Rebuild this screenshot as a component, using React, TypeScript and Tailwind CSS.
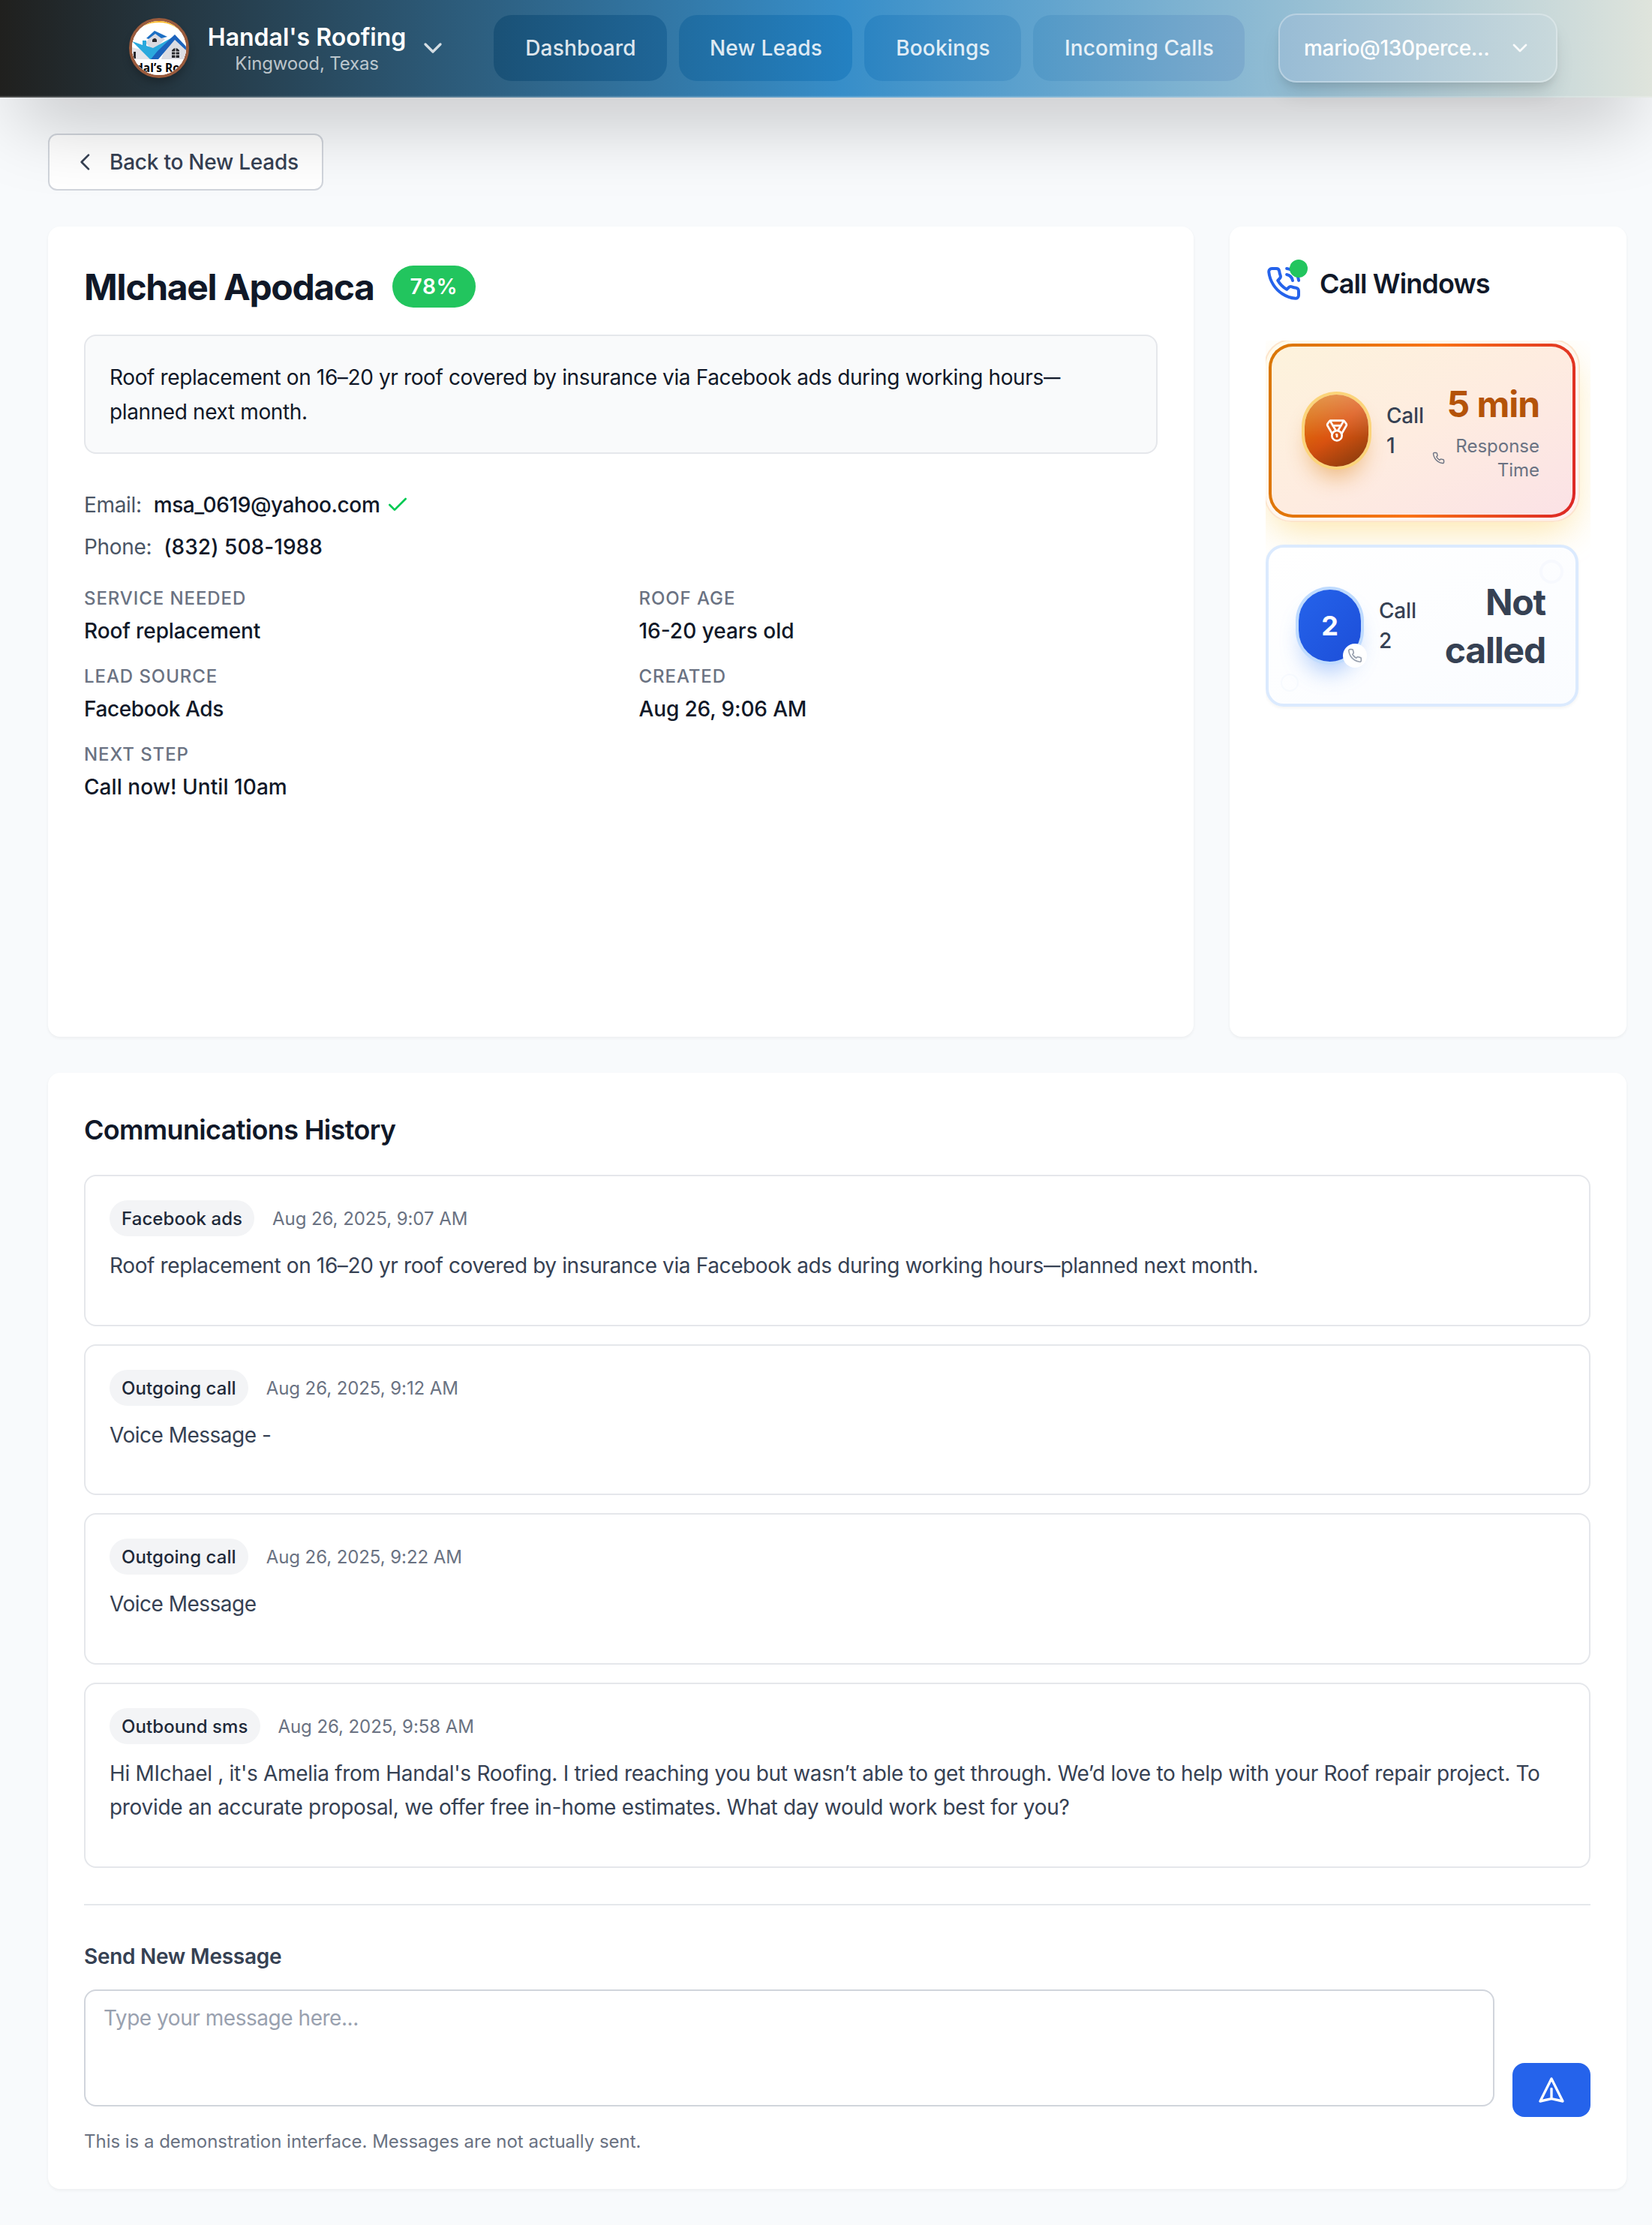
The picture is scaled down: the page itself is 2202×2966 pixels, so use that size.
import { Check, ChevronDown, Medal } from 'lucide-react';
import { Fragment, type ReactNode } from 'react';

const PHONE =
  'M22 16.92v3a2 2 0 0 1-2.18 2 19.79 19.79 0 0 1-8.63-3.07 19.5 19.5 0 0 1-6-6 19.79 19.79 0 0 1-3.07-8.67A2 2 0 0 1 4.11 2h3a2 2 0 0 1 2 1.72 12.84 12.84 0 0 0 .7 2.81 2 2 0 0 1-.45 2.11L8.09 9.91a16 16 0 0 0 6 6l1.27-1.27a2 2 0 0 1 2.11-.45 12.84 12.84 0 0 0 2.81.7A2 2 0 0 1 22 16.92z';

function Icon({ className, children }: { className: string; children: ReactNode }) {
  return (
    <svg
      viewBox="0 0 24 24"
      fill="none"
      stroke="currentColor"
      strokeWidth={2}
      strokeLinecap="round"
      strokeLinejoin="round"
      className={className}
    >
      {children}
    </svg>
  );
}

/* Sets em dashes slightly narrower than the font draws them. */
function Prose({ text }: { text: string }) {
  return (
    <>
      {text.split('—').map((part, i) => (
        <Fragment key={i}>
          {i > 0 && <span className="-mr-[5px] inline-block origin-left scale-x-[0.8]">—</span>}
          {part}
        </Fragment>
      ))}
    </>
  );
}

function Logo() {
  return (
    <div className="size-20 shrink-0 overflow-hidden rounded-full border-4 border-[#9a5b3d] bg-white shadow-[0_8px_12px_-2px_rgba(0,0,0,0.25)]">
      <svg viewBox="4 4 72 72" className="size-full">
        <rect width="80" height="80" fill="#fff" />
        <path d="M2 30C10 12 24 6 40 6s30 8 38 26V0H2z" fill="#fdb81e" />
        <path d="M4 28C14 15 26 12 40 13c16 1 28 7 36 22v45H4z" fill="#fff" />
        <path d="M22 33 34 19l14 9-9 9-9 5z" fill="#d9d9e0" />
        <path d="M34 17 23 27l3 1 9-7 8 6 8-2z" fill="#1c6fc4" />
        <path d="M31 32v-3q3.500-4 6 0v3z" fill="#26262b" />
        <path d="M4 39v16h27l-16-13z" fill="#e4e4e9" />
        <path d="M43 55 47 43l14-16 15 14v14z" fill="#dcdce2" />
        <path d="M4 31 18 36v-6h5v7l9 3 29-16L38 55H28z" fill="#2ba9dd" />
        <path d="M61 22 38 44l-9 11h10l22-26 15 14v-5z" fill="#1c63bd" />
        <path d="M57 53V43q5-6 10 0v10z" fill="#26262b" />
        <path d="M62 40v13M57 45h10M57 49h10" stroke="#fff" strokeWidth="1" />
        <path d="M6 45h3v9H6z" fill="#26262b" />
        <text x="9" y="72" fontSize="15.500" fontWeight="700" fontFamily="Open Sans, sans-serif" fill="#000">
          dal’s Roo
        </text>
      </svg>
    </div>
  );
}

function Header() {
  const pill =
    'flex h-22 items-center justify-center rounded-3xl bg-linear-to-r pl-px text-[28px] font-medium tracking-[0.006em] text-white/85';
  return (
    <header className="relative z-10 flex h-[130px] items-center border-b-2 border-white/20 bg-[linear-gradient(90deg,#20201e_0%,#378ec9_51%,#dfe4dc_100%)] bg-origin-border pl-[172px] shadow-[0_50px_100px_-24px_rgba(0,0,0,0.25)]">
      <Logo />
      <div className="ml-[25px] flex w-[264px] flex-col items-center pt-0.5 whitespace-nowrap">
        <div className="text-[32px] leading-10 font-semibold text-white">Handal's Roofing</div>
        <div className="text-2xl leading-[30px] tracking-[-0.006em] text-white/70">Kingwood, Texas</div>
      </div>
      <ChevronDown className="ml-4 size-10 text-white/80" strokeWidth={2} />
      <nav className="ml-[61px] flex gap-4">
        <div className={`${pill} w-[231px] from-[#1a5176] to-[#1f6698]`}>Dashboard</div>
        <div className={`${pill} w-[231px] from-[#206ca0] to-[#2481c2]`}>New Leads</div>
        <div className={`${pill} w-[209px] from-[#2b84c2] to-[#4d96c7]`}>Bookings</div>
        <div className={`${pill} w-[282px] from-[#5299c7] to-[#7dabcd]`}>Incoming Calls</div>
      </nav>
      <div className="ml-[45px] flex h-[92px] w-[372px] items-center justify-between rounded-3xl border-2 border-white/30 bg-linear-to-r from-[#98bcd5] to-[#c9d9dc] bg-origin-border pr-8 pl-8 text-[28px] font-medium tracking-[-0.0115em] text-white shadow-[0_20px_30px_-6px_rgba(0,0,0,0.1),0_8px_12px_-4px_rgba(0,0,0,0.1)]">
        mario@130perce...
        <ChevronDown className="size-8 text-white/90" />
      </div>
    </header>
  );
}

function Field({ label, value, tracking }: { label: string; value: string; tracking: string }) {
  return (
    <div>
      <div className="pt-px text-2xl leading-8 font-medium tracking-[0.0384em] text-gray-500 uppercase">{label}</div>
      <div className={`mt-[7px] text-[28px] leading-10 font-[460] text-gray-900 ${tracking}`}>{value}</div>
    </div>
  );
}

function LeadCard() {
  return (
    <section className="w-[1527px] rounded-2xl bg-white p-12 shadow-[0_2px_4px_rgba(0,0,0,0.05)]">
      <div className="flex items-center gap-6">
        <h1 className="pt-0.5 text-5xl leading-[62px] font-bold tracking-[-0.029em] text-gray-900">MIchael Apodaca</h1>
        <span className="flex h-14 items-center rounded-full bg-[#22c55e] px-6 text-[28px] font-semibold tracking-[0.025em] text-white">
          78%
        </span>
      </div>
      <div className="mt-8 rounded-2xl border-2 border-gray-200 bg-gray-50 px-8 pt-[33px] pb-[31px] text-[28px] leading-[45.5px] tracking-[-0.0135em] text-gray-900">
        <Prose text="Roof replacement on 16–20 yr roof covered by insurance via Facebook ads during working hours—" />
        <br />
        planned next month.
      </div>
      <div className="mt-12 flex flex-col gap-4 text-[28px] leading-10 tracking-[-0.012em]">
        <div className="flex items-center">
          <span className="mr-4 text-gray-600">Email:</span>
          <span className="font-[460] tracking-[-0.0145em] text-gray-900">msa_0619@yahoo.com</span>
          <Check className="ml-2 size-8 text-green-500" />
        </div>
        <div className="flex items-center">
          <span className="mr-4 text-gray-600">Phone:</span>
          <span className="font-[460] tracking-[0.002em] text-gray-900">(832) 508-1988</span>
        </div>
      </div>
      <div className="mt-8 grid grid-cols-2 gap-x-12 gap-y-6">
        <Field label="Service needed" value="Roof replacement" tracking="tracking-[-0.004em]" />
        <Field label="Roof age" value="16-20 years old" tracking="tracking-[0em]" />
        <Field label="Lead source" value="Facebook Ads" tracking="tracking-[-0.014em]" />
        <Field label="Created" value="Aug 26, 9:06 AM" tracking="tracking-[-0.005em]" />
        <Field label="Next step" value="Call now! Until 10am" tracking="tracking-[0.002em]" />
      </div>
    </section>
  );
}

function CallOne() {
  return (
    <div className="-mx-0.5 -mt-0.5 h-[244px] rounded-[36px] border-2 border-[#fde0c4]/80 bg-linear-to-br from-[#fffbeb] via-[#fff7ef] to-[#fff1f1] p-1 shadow-[0_20px_50px_-10px_rgba(251,191,36,0.4)]">
      <div className="h-full rounded-[32px] bg-linear-[100deg] from-[#d97706] via-[#f97316] to-[#dc2626] p-1">
        <div className="flex h-full items-center rounded-[28px] bg-linear-to-br from-[#fdf3dc] via-[#feece0] to-[#fbe2e6] px-[44px]">
          <div className="flex h-24 w-[85px] shrink-0 items-center justify-center rounded-full bg-[linear-gradient(180deg,rgba(255,255,255,0.28),rgba(255,255,255,0)_60%,rgba(0,0,0,0.12)),linear-gradient(135deg,#d97706,#dc5310_50%,#92400e)] text-white shadow-[0_0_0_4px_#fbd47a,0_20px_30px_-6px_rgba(217,119,6,0.45)]">
            <Medal className="size-8" />
          </div>
          <div className="ml-6 w-[51px] text-[28px] leading-10 font-[460] tracking-[-0.006em] text-gray-700">
            Call
            <br />1
          </div>
          <div className="ml-auto flex flex-col items-end pt-px">
            <div className="text-5xl leading-16 font-bold tracking-[-0.022em] whitespace-nowrap text-[#b45309]">5 min</div>
            <div className="mt-2 flex items-center text-right text-2xl leading-8 text-gray-500">
              <Icon className="mr-3.5 size-[17px]">
                <path d={PHONE} />
              </Icon>
              <span>
                Response
                <br />
                Time
              </span>
            </div>
          </div>
        </div>
      </div>
    </div>
  );
}

function CallTwo() {
  return (
    <div className="relative mt-[30px] flex h-[216px] items-center rounded-3xl border-4 border-[#dbeafe] bg-linear-to-br from-white to-[#fafcff] px-10 shadow-[0_2px_4px_rgba(0,0,0,0.05)]">
      <div className="absolute top-4 right-4 size-8 rounded-full border-4 border-[#f7f9fe]" />
      <div className="absolute bottom-4 left-4 size-6 rounded-full border-2 border-[#f7fafe]" />
      <div className="relative flex h-24 w-[83px] shrink-0 items-center justify-center rounded-full bg-linear-to-br from-[#2563eb] to-[#1d4ed8] text-4xl font-bold text-white shadow-[0_0_0_4px_#bfdbfe,0_20px_30px_-6px_rgba(59,130,246,0.4)]">
        2
        <div className="absolute -right-2 -bottom-2 flex size-8 items-center justify-center rounded-full bg-white text-gray-400">
          <Icon className="size-5">
            <path d={PHONE} />
          </Icon>
        </div>
      </div>
      <div className="ml-6 w-[51px] text-[28px] leading-10 font-[460] tracking-[-0.006em] text-gray-700">
        Call
        <br />2
      </div>
      <div className="ml-auto pt-0.5 text-right text-5xl leading-16 font-bold tracking-[-0.025em] text-gray-700">
        Not
        <br />
        called
      </div>
    </div>
  );
}

function CallWindows() {
  return (
    <section className="flex w-[529px] flex-col rounded-2xl bg-white p-12 shadow-[0_2px_4px_rgba(0,0,0,0.05)]">
      <div className="flex h-14 items-center gap-6">
        <div className="relative">
          <Icon className="size-12 text-[#2563eb]">
            <path d={PHONE} />
            <path d="M14.050 2a9 9 0 0 1 8 7.940" />
            <path d="M14.050 6A5 5 0 0 1 18 10" />
          </Icon>
          <div className="absolute -top-2 -right-2 size-6 rounded-full bg-[#22c55e]" />
        </div>
        <h2 className="text-4xl font-semibold tracking-[-0.024em] text-gray-900">Call Windows</h2>
      </div>
      <div className="mt-12 flex-1 overflow-hidden pr-4">
        <CallOne />
        <CallTwo />
      </div>
    </section>
  );
}

const MESSAGES = [
  {
    kind: 'Facebook ads',
    date: 'Aug 26, 2025, 9:07 AM',
    tracking: 'tracking-[-0.0135em]',
    body: 'Roof replacement on 16–20 yr roof covered by insurance via Facebook ads during working hours—planned next month.',
  },
  { kind: 'Outgoing call', date: 'Aug 26, 2025, 9:12 AM', tracking: 'tracking-[-0.018em]', body: 'Voice Message -' },
  { kind: 'Outgoing call', date: 'Aug 26, 2025, 9:22 AM', tracking: 'tracking-[-0.018em]', body: 'Voice Message' },
  {
    kind: 'Outbound sms',
    date: 'Aug 26, 2025, 9:58 AM',
    tracking: 'tracking-[-0.0108em]',
    body: "Hi MIchael , it's Amelia from Handal's Roofing. I tried reaching you but wasn’t able to get through. We’d love to help with your Roof repair project. To provide an accurate proposal, we offer free in-home estimates. What day would work best for you?",
  },
];

function Communications() {
  return (
    <section className="mt-12 rounded-2xl bg-white p-12 shadow-[0_2px_4px_rgba(0,0,0,0.05)]">
      <h2 className="text-4xl leading-14 font-semibold tracking-[-0.0185em] text-gray-900">Communications History</h2>
      <div className="mt-8 flex flex-col gap-6">
        {MESSAGES.map((m) => (
          <article key={m.date} className="rounded-2xl border-2 border-gray-200 px-8 pt-8 pb-[55px]">
            <div className="flex items-center gap-6 text-2xl leading-8">
              <span className="rounded-full bg-gray-100 px-4 pt-[9px] pb-[7px] font-medium tracking-[0.003em] text-gray-800">
                {m.kind}
              </span>
              <span className="pt-0.5 tracking-[-0.003em] text-gray-500">{m.date}</span>
            </div>
            <p className={`mt-[17px] text-[28px] leading-[45.5px] text-gray-700 ${m.tracking}`}>
              <Prose text={m.body} />
            </p>
          </article>
        ))}
      </div>
      <div className="mt-12 border-t-2 border-gray-200 pt-12">
        <h3 className="text-[28px] leading-10 font-semibold tracking-[-0.01em] text-gray-700">Send New Message</h3>
        <div className="mt-6 flex h-[170px] items-end gap-6">
          <textarea
            placeholder="Type your message here..."
            className="block h-[156px] flex-1 resize-none self-start rounded-2xl border-2 border-gray-300 bg-white px-6 py-4 text-[28px] leading-10 tracking-[-0.0165em] placeholder:text-gray-400"
          />
          <button className="flex h-[72px] w-[104px] items-center justify-center rounded-2xl bg-[#2563eb] text-white">
            <Icon className="size-10">
              <path d="M12 19l9 2-9-18-9 18 9-2zm0 0v-8" />
            </Icon>
          </button>
        </div>
        <p className="mt-[17px] -mb-px text-2xl leading-8 tracking-[-0.001em] text-gray-500">
          This is a demonstration interface. Messages are not actually sent.
        </p>
      </div>
    </section>
  );
}

export default function App() {
  return (
    <div className="min-h-[2966px] w-[2202px] bg-slate-50 font-['Inter',sans-serif]">
      <Header />
      <main className="pt-12 pr-[34px] pb-12 pl-16">
        <button className="flex h-[76px] w-[367px] items-center gap-4 rounded-xl border-2 border-gray-300 bg-white px-8 text-[28px] font-[460] tracking-[-0.0085em] whitespace-nowrap text-gray-700">
          <Icon className="size-8 shrink-0">
            <path d="M15 19l-7-7 7-7" />
          </Icon>
          Back to New Leads
        </button>
        <div className="mt-12 flex h-[1080px] gap-12">
          <LeadCard />
          <CallWindows />
        </div>
        <Communications />
      </main>
    </div>
  );
}
